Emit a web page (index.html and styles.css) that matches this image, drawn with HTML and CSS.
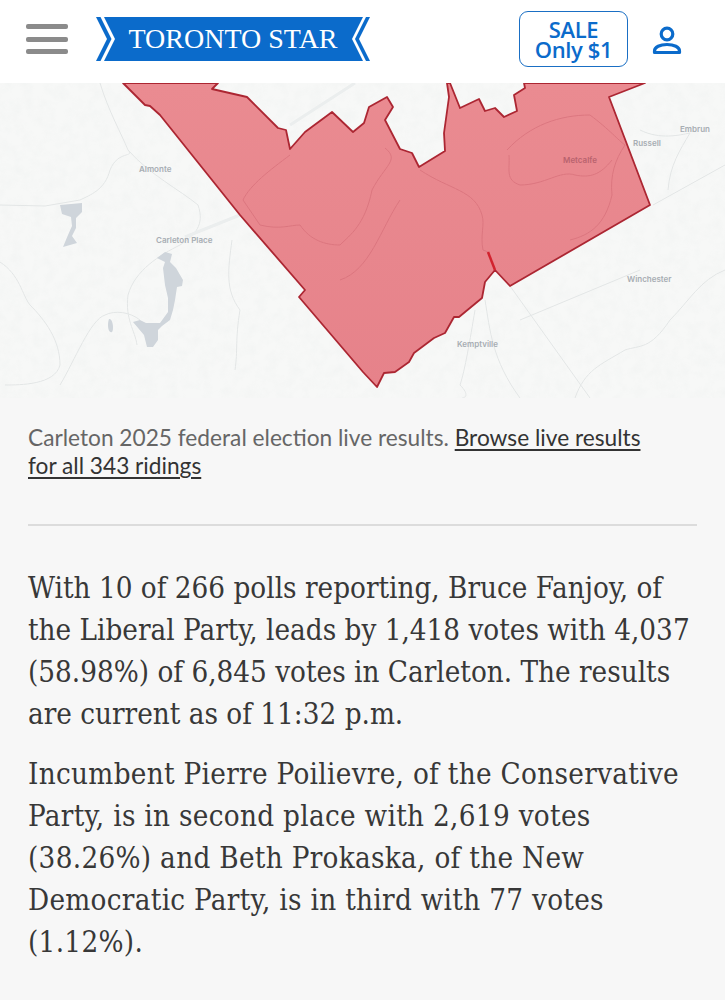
FILE: index.html
```html
<!DOCTYPE html>
<html lang="en">
<head>
<meta charset="utf-8">
<title>Carleton 2025 federal election live results</title>
<link rel="stylesheet" href="styles.css">
</head>
<body>
<header class="top">
  <button class="burger" aria-label="Menu"><span></span><span></span><span></span></button>
  <div class="logo">
    <svg class="logo-bg" viewBox="0 0 274 44" width="274" height="44" aria-hidden="true">
      <path d="M8 0H267L256 22L267 44H8L19 22Z" fill="#0b6bcb"/>
      <path d="M0 0H4.5L15.5 22L4.5 44H0L11 22Z" fill="#0b6bcb"/>
      <path d="M274 0H270L259 22L270 44H274L263 22Z" fill="#0b6bcb"/>
    </svg>
    <span class="logo-text">TORONTO STAR</span>
  </div>
  <a class="sale"><span>SALE</span><span>Only $1</span></a>
  <svg class="person" viewBox="0 0 30 30" width="30" height="30" fill="none" stroke="#0b6bcb" stroke-width="3.2" aria-label="Account">
    <circle cx="15" cy="9" r="5.8"/>
    <path d="M2.5 26C2.5 22 8 19.5 15 19.5S27.5 22 27.5 26V27.5H2.5Z" stroke-linejoin="round"/>
  </svg>
</header>
<figure class="map">
  <svg viewBox="0 83 725 315" width="725" height="315" role="img" aria-label="Map of Carleton riding">
    <defs>
      <filter id="soft" x="-2%" y="-2%" width="104%" height="104%"><feGaussianBlur stdDeviation="0.4"/></filter>
      <filter id="grain" x="0" y="0" width="100%" height="100%">
        <feTurbulence type="fractalNoise" baseFrequency="0.09" numOctaves="3" seed="4"/>
        <feColorMatrix values="0 0 0 0 0.75  0 0 0 0 0.78  0 0 0 0 0.78  0.9 0 0 0 -0.33"/>
      </filter>
      <linearGradient id="red" x1="0" y1="0" x2="0" y2="1">
        <stop offset="0" stop-color="#ea8b91"/>
        <stop offset="1" stop-color="#e6828a"/>
      </linearGradient>
    </defs>
    <rect x="0" y="83" width="725" height="315" fill="#f7f8f7"/>
    <rect x="0" y="83" width="725" height="315" filter="url(#grain)" opacity=".35"/>
    <g filter="url(#soft)">
      <g fill="none" stroke="#e3e6e6" stroke-width="1">
        <path d="M100 83C108 110 122 135 128 150C135 158 118 150 110 170C105 190 90 195 80 200L45 206L0 205"/>
        <path d="M128 150C150 175 180 190 198 205C205 225 195 235 180 245C160 255 135 270 128 295C125 320 135 330 137 345"/>
        <path d="M0 262C20 275 22 295 30 305C45 320 60 340 60 365C55 385 20 385 5 385"/>
        <path d="M60 385C75 360 90 320 105 315C115 310 130 312 140 320"/>
        <path d="M232 240C228 270 225 290 240 310C235 340 238 350 235 370"/>
        <path d="M640 130C660 140 680 135 690 133C680 150 670 165 668 190"/>
        <path d="M653 205L725 165"/>
        <path d="M510 286L590 398"/>
        <path d="M725 270C700 280 690 300 670 320C650 350 640 345 625 350C600 365 585 370 575 398"/>
        <path d="M485 300C490 330 492 360 520 398"/>
        <path d="M475 310C470 340 465 370 460 385C470 395 465 398 462 398"/>
        <path d="M520 320L640 270M420 165L385 200"/>
      </g>
      <path d="M290 125L355 83M185 237L240 215" fill="none" stroke="#ebeeee" stroke-width="3"/>
      <g fill="#cfd5db">
        <path d="M60 205L82 203L82 212L76 218L76 228L72 236L77 243L63 247L68 235L72 226L71 217L62 214Z"/>
        <path d="M157 258L165 252L172 254L170 262L176 268L183 280L182 286L177 287L175 300L173 310L170 320L162 326L158 330L158 340L153 347L147 347L144 335L133 322L140 320L146 323L160 323L168 312L168 298L165 285L163 268L165 262Z"/>
        <path d="M109 319C113 318 114 330 112 332C108 334 107 324 109 319Z"/>
      </g>
      <path class="riding" d="M123 83L145 105L150 106L160 115L240 215L305 290L299 297L363 372L377 387L384 373L395 372L409 362L414 353L434 338L445 333L454 317L459 317L482 298L485 282L495 270L510 286L650 205L609 97L645 83L524 83L525 88L514 95L517 111L504 117L495 108L485 111L479 99L460 108L450 83L447 83L449 97L444 133L445 151L419 167L412 153L400 149L385 120L393 107L387 97L369 107L364 123L353 132L332 112L305 132L290 149L286 130L278 128L247 97L212 89L218 83Z"/>
      <g fill="none" stroke="#d66f79" stroke-width="1" opacity=".7">
        <path d="M290 155C270 170 250 185 243 200L260 225C280 230 290 225 300 225C310 240 325 245 340 245C350 235 365 225 372 190C385 165 400 160 385 148"/>
        <path d="M420 170C450 190 475 190 482 215C485 225 480 235 483 250L488 252"/>
        <path d="M507 150C530 125 560 115 590 115C610 130 618 140 625 145C615 160 610 175 612 195C605 225 590 235 570 240"/>
        <path d="M509 155C510 170 505 180 520 185C545 185 560 170 575 175C590 178 600 175 612 160"/>
        <path d="M400 200C380 230 370 270 340 280"/>
      </g>
      <path d="M488 252L495 270" stroke="#d2232f" stroke-width="2.5" fill="none"/>
    </g>
    <g class="labels">
      <text x="139" y="172">Almonte</text>
      <text x="156" y="243">Carleton Place</text>
      <text x="633" y="146">Russell</text>
      <text x="680" y="132">Embrun</text>
      <text x="627" y="282">Winchester</text>
      <text x="457" y="347">Kemptville</text>
      <text class="on-red" x="563" y="163">Metcalfe</text>
    </g>
  </svg>
</figure>
<main class="content">
  <p class="caption">Carleton 2025 federal election live results. <a href="#">Browse live results for all 343 ridings</a></p>
  <hr class="rule">
  <p class="body-text">With 10 of 266 polls reporting, Bruce Fanjoy, of the Liberal Party, leads by 1,418 votes with 4,037 (58.98%) of 6,845 votes in Carleton. The results are current as of 11:32 p.m.</p>
  <p class="body-text loose">Incumbent Pierre Poilievre, of the Conservative Party, is in second place with 2,619 votes (38.26%) and Beth Prokaska, of the New Democratic Party, is in third with 77 votes (1.12%).</p>
</main>
</body>
</html>
```
FILE: styles.css
```css
* { box-sizing: border-box; }
html, body { margin: 0; padding: 0; }
body { width: 725px; height: 1000px; overflow: hidden; background: #f7f7f7; font-family: "Liberation Serif", serif; }
.top { height: 83px; background: #fff; display: flex; align-items: center; padding: 0 43px 0 26px; }
.burger { width: 42px; height: 30px; margin-top: -5px; padding: 0; border: 0; background: none; display: flex; flex-direction: column; justify-content: space-between; margin-right: 28px; }
.burger span { display: block; height: 5px; border-radius: 2px; background: #8b8b8b; }
.logo { position: relative; width: 274px; height: 44px; margin-top: -5px; }
.logo-bg { display: block; }
.logo-text { position: absolute; inset: 0; display: flex; align-items: center; justify-content: center; color: #fff; font: 400 28px "Liberation Serif", serif; }
.sale { width: 109px; height: 56px; margin-left: auto; margin-top: -5px; border: 1.5px solid #1a6fc4; border-radius: 9px; display: flex; flex-direction: column; align-items: center; justify-content: center; color: #0b6bcb; font: 600 22px/20px "Open Sans", sans-serif; letter-spacing: -.4px; }
.person { margin-left: 24px; margin-top: -4px; }
.map { margin: 0; height: 315px; }
.map svg { display: block; }
.riding { fill: url(#red); stroke: #ac2733; stroke-width: 1.8; stroke-linejoin: round; }
.labels text { font: 600 8px "Inter", sans-serif; fill: #a7adb3; }
.labels .on-red { fill: #b9636e; }
.content { padding: 26px 28px 0; }
.caption { margin: 0; font: 400 22.7px/28px "Lato", sans-serif; color: #666; width: 625px; }
.caption a { color: #333; text-decoration: underline; text-underline-offset: 3px; }
.rule { margin: 44px 0 41px; border: 0; border-top: 2px solid #dcdcdc; }
.body-text { margin: 0 -7px 18px 0; font: 400 29.3px/42px "DejaVu Serif", serif; font-stretch: 75%; color: #383838; }
.loose { letter-spacing: .3px; }
```
